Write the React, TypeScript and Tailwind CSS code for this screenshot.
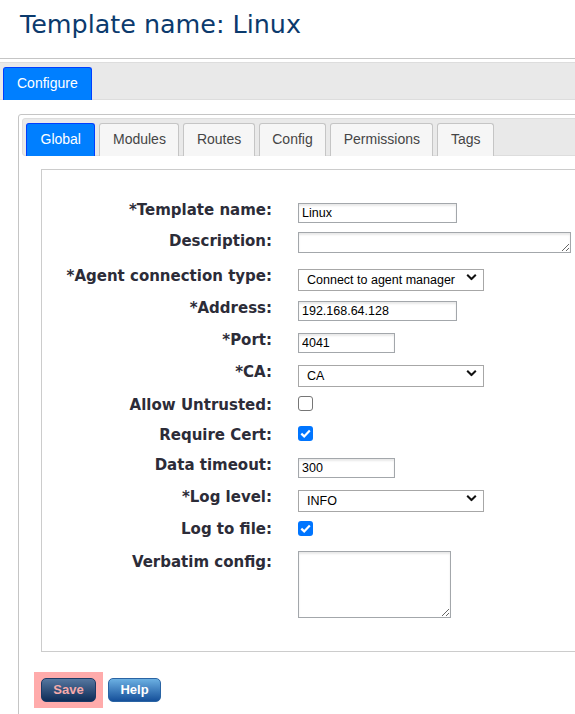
import type { ReactNode } from "react";

const sans = "font-['Liberation_Sans',Arial,sans-serif]";
const verdana = "font-['DejaVu_Sans',Verdana,sans-serif]";

const Chevron = () => (
    <svg
        className="pointer-events-none absolute right-[7px] top-1/2 -translate-y-1/2"
        width="11"
        height="7"
        viewBox="0 0 11 7"
        fill="none"
    >
        <path d="M1.2 1.2 L5.5 5.5 L9.8 1.2" stroke="#111" strokeWidth="2" />
    </svg>
);

const Select = ({ value }: { value: string }) => (
    <div className="relative h-[22px] w-[186px]">
        <select
            defaultValue={value}
            className={`${sans} h-[22px] w-[186px] appearance-none border border-[#a7a7a7] bg-white pl-[8px] text-[12.5px] text-black outline-none`}
        >
            <option>{value}</option>
        </select>
        <Chevron />
    </div>
);

const TextInput = ({ value, width }: { value: string; width: string }) => (
    <input
        defaultValue={value}
        className={`${sans} ${width} h-[20px] border border-[#a3a7ab] bg-white px-[3px] text-[12.5px] text-black shadow-[inset_0_2px_2px_rgba(0,0,0,0.09)] outline-none`}
    />
);

const Checkbox = ({ checked }: { checked: boolean }) =>
    checked ? (
        <span className="flex h-[15px] w-[15px] items-center justify-center rounded-[3px] bg-[#0075ff]">
            <svg width="11" height="9" viewBox="0 0 11 9" fill="none">
                <path d="M1.3 4.6 L4.2 7.4 L9.8 1.4" stroke="white" strokeWidth="2.2" />
            </svg>
        </span>
    ) : (
        <span className="block h-[15px] w-[15px] rounded-[3px] border-[1.5px] border-[#767676] bg-white" />
    );

interface RowProps {
    label: string;
    rowClass: string;
    labelClass: string;
    children: ReactNode;
}

// one line of the settings form: bold label on the left, control on the right
const Row = ({ label, rowClass, labelClass, children }: RowProps) => (
    <div className={`flex ${rowClass}`}>
        <div
            className={`${verdana} w-[230px] shrink-0 text-right text-[15px] font-bold leading-[18px] text-[#2c2c38] ${labelClass}`}
        >
            {label}
        </div>
        <div className="ml-[26px]">{children}</div>
    </div>
);

const innerTabs = ["Global", "Modules", "Routes", "Config", "Permissions", "Tags"];

export default function App() {
    return (
        <div className="h-[714px] w-[575px] overflow-hidden bg-white">
            <h1
                className={`${verdana} h-[58px] pl-[20px] pt-[9px] text-[25.4px] font-normal leading-[30px] text-[#0b3a6d]`}
            >
                Template name: Linux
            </h1>

            <div className="w-[640px] border-t border-[#c5c5c5] pt-[3px]">
                <div className="flex h-[38px] items-start border-y border-[#dddddd] bg-[#e9e9e9] pl-[3px] pt-[4px]">
                    <div
                        className={`${sans} h-[33px] rounded-t-[3px] border border-b-0 border-[#003eff] bg-[#007fff] px-[13px] pt-[7px] text-[14px] leading-[16px] text-white`}
                    >
                        Configure
                    </div>
                </div>

                <div className="pl-[18px] pt-[14px]">
                    <div className="w-[620px] rounded-[3px] border border-[#c5c5c5] p-[3px]">
                        <div className="flex h-[38px] items-start gap-[4px] rounded-[3px] border border-[#dddddd] bg-[#e9e9e9] pl-[3px] pt-[4px]">
                            {innerTabs.map((tab, i) =>
                                i === 0 ? (
                                    <div
                                        key={tab}
                                        className={`${sans} h-[33px] rounded-t-[3px] border border-b-0 border-[#003eff] bg-[#007fff] px-[13.5px] pt-[7px] text-[14px] leading-[16px] text-white`}
                                    >
                                        {tab}
                                    </div>
                                ) : (
                                    <div
                                        key={tab}
                                        className={`${sans} h-[33px] rounded-t-[3px] border border-b-0 border-[#c5c5c5] bg-[#f6f6f6] px-[12.5px] pt-[7px] text-[14px] leading-[16px] text-[#454545]`}
                                    >
                                        {tab}
                                    </div>
                                )
                            )}
                        </div>

                        <div className="pl-[19px] pt-[13px] pb-[40px]">
                            <div className="h-[483px] w-[600px] border border-[#cccccc] pt-[31px]">
                                <Row label="*Template name:" rowClass="h-[20px] items-center" labelClass="pb-[2px]">
                                    <TextInput value="Linux" width="w-[159px]" />
                                </Row>
                                <Row label="Description:" rowClass="mt-[11px] h-[21px] items-center" labelClass="pb-[3px]">
                                    <textarea
                                        className={`${sans} block h-[21px] w-[273px] resize border border-[#a3a7ab] bg-white text-[12.5px] shadow-[inset_0_2px_2px_rgba(0,0,0,0.09)] outline-none`}
                                    />
                                </Row>
                                <Row label="*Agent connection type:" rowClass="mt-[13px] h-[22px] items-center" labelClass="pb-[3px]">
                                    <Select value="Connect to agent manager" />
                                </Row>
                                <Row label="*Address:" rowClass="mt-[11px] h-[20px] items-center" labelClass="pb-[2px]">
                                    <TextInput value="192.168.64.128" width="w-[159px]" />
                                </Row>
                                <Row label="*Port:" rowClass="mt-[12px] h-[20px] items-center" labelClass="pb-[2px]">
                                    <TextInput value="4041" width="w-[97px]" />
                                </Row>
                                <Row label="*CA:" rowClass="mt-[11px] h-[22px] items-center" labelClass="pb-[3px]">
                                    <Select value="CA" />
                                </Row>
                                <Row label="Allow Untrusted:" rowClass="mt-[12px] h-[15px] items-center" labelClass="pt-[3px]">
                                    <Checkbox checked={false} />
                                </Row>
                                <Row label="Require Cert:" rowClass="mt-[15px] h-[15px] items-center" labelClass="pt-[3px]">
                                    <Checkbox checked />
                                </Row>
                                <Row label="Data timeout:" rowClass="mt-[15px] h-[20px] items-center" labelClass="pb-[2px]">
                                    <TextInput value="300" width="w-[97px]" />
                                </Row>
                                <Row label="*Log level:" rowClass="mt-[11px] h-[22px] items-center" labelClass="pb-[3px]">
                                    <Select value="INFO" />
                                </Row>
                                <Row label="Log to file:" rowClass="mt-[12px] h-[15px] items-center" labelClass="pt-[1px]">
                                    <Checkbox checked />
                                </Row>
                                <Row label="Verbatim config:" rowClass="mt-[15px] items-start" labelClass="mt-[2px]">
                                    <textarea
                                        className={`${sans} block h-[67px] w-[153px] resize border border-[#a3a7ab] bg-white text-[12.5px] shadow-[inset_0_2px_2px_rgba(0,0,0,0.09)] outline-none`}
                                    />
                                </Row>
                            </div>

                            <div className="mt-[20px] flex items-center">
                                <div className="-ml-[7px] bg-[#ffabab] px-[7px] py-[6px]">
                                    <button
                                        className={`${sans} block h-[24px] w-[55px] rounded-[5px] border border-[#1b3a66] bg-gradient-to-b from-[#56779f] to-[#0e2d58] text-[13px] font-bold text-[#f6aaaa]`}
                                    >
                                        Save
                                    </button>
                                </div>
                                <button
                                    className={`${sans} ml-[5px] h-[24px] w-[53px] rounded-[5px] border border-[#2a64a4] bg-gradient-to-b from-[#6cb0e2] to-[#15509a] text-[13px] font-bold text-white`}
                                >
                                    Help
                                </button>
                            </div>
                        </div>
                    </div>
                </div>
            </div>
        </div>
    );
}
